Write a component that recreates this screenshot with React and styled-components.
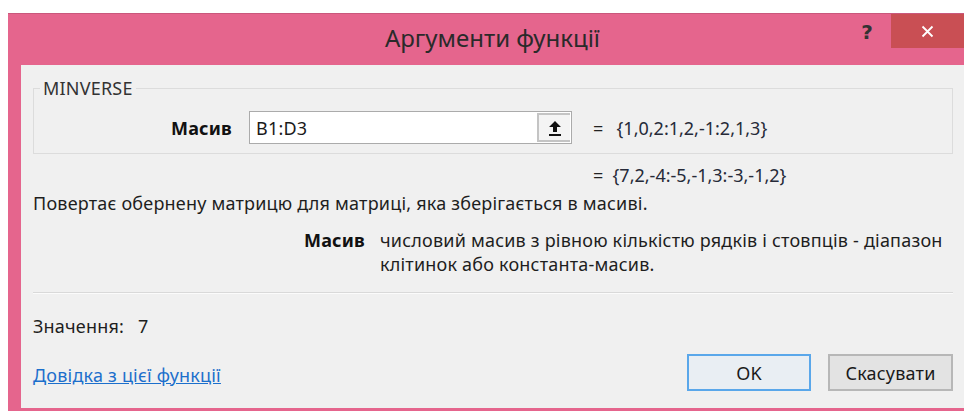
import styled, { createGlobalStyle } from "styled-components";

const GlobalStyle = createGlobalStyle`
  html, body {
    margin: 0;
    padding: 0;
    background: #ffffff;
    overflow: hidden;
  }
  body {
    font-family: "Noto Sans", "Open Sans", sans-serif;
    font-size: 18px;
    letter-spacing: 0.2px;
    color: #1e1e1e;
  }
`;

const ArrowUpIcon = () => (
  <svg width="14" height="16" viewBox="0 0 14 16">
    <path d="M7 1 L13 7 L9 7 L9 12 L5 12 L5 7 L1 7 Z" fill="#111" />
    <rect x="1" y="14" width="12" height="2" fill="#111" />
  </svg>
);

const CloseIcon = () => (
  <svg width="13" height="13" viewBox="0 0 13 13">
    <path d="M1.5 1.5 L11.5 11.5 M11.5 1.5 L1.5 11.5" stroke="#fff" strokeWidth="1.8" />
  </svg>
);

const App = () => {
  return (
    <>
      <GlobalStyle />
      <Window>
        <TitleBar>
          <Title>Аргументи функції</Title>
          <HelpMark>?</HelpMark>
          <CloseButton>
            <CloseIcon />
          </CloseButton>
        </TitleBar>
        <Body>
          <Group>
            <Legend>MINVERSE</Legend>
            <ArgRow>
              <ArgLabel>Масив</ArgLabel>
              <RefBox>
                <RefInput defaultValue="B1:D3" />
                <CollapseButton>
                  <ArrowUpIcon />
                </CollapseButton>
              </RefBox>
              <Eq>=</Eq>
              <Preview>{"{1,0,2:1,2,-1:2,1,3}"}</Preview>
            </ArgRow>
          </Group>

          <ResultRow>
            <Eq>=</Eq>
            <Preview>{"{7,2,-4:-5,-1,3:-3,-1,2}"}</Preview>
          </ResultRow>

          <Description>
            Повертає обернену матрицю для матриці, яка зберігається в масиві.
          </Description>

          <ArgHelp>
            <ArgLabel>Масив</ArgLabel>
            <ArgText>
              числовий масив з рівною кількістю рядків і стовпців - діапазон
              клітинок або константа-масив.
            </ArgText>
          </ArgHelp>

          <Separator />

          <ValueRow>
            <span>Значення:</span>
            <span>7</span>
          </ValueRow>

          <Footer>
            <HelpLink href="#">Довідка з цієї функції</HelpLink>
            <Buttons>
              <DialogButton $primary>OK</DialogButton>
              <DialogButton>Скасувати</DialogButton>
            </Buttons>
          </Footer>
        </Body>
      </Window>
    </>
  );
};

export default App;

const Window = styled.div`
  margin: 13px 0 0 8px;
  width: 969px;
  height: 402px;
  background: #e5658d;
  border-top: 1px solid #c9587c;
  display: flex;
  flex-direction: column;
`;

const TitleBar = styled.div`
  position: relative;
  height: 51px;
  display: flex;
  align-items: center;
  justify-content: center;
`;

const Title = styled.div`
  font-size: 24px;
  letter-spacing: 0;
  color: #2a2a2a;
  margin-top: -4px;
`;

const HelpMark = styled.div`
  position: absolute;
  right: 104px;
  top: 6px;
  font-family: "DejaVu Sans", sans-serif;
  font-weight: bold;
  font-size: 20px;
  color: #333;
`;

const CloseButton = styled.div`
  position: absolute;
  right: 13px;
  top: 0;
  width: 73px;
  height: 34px;
  background: #c94f54;
  display: flex;
  align-items: center;
  justify-content: center;
`;

const Body = styled.div`
  flex: 1;
  margin: 0 12px 8px 13px;
  background: #f0f0f0;
  padding: 14px 12px 0;
  display: flex;
  flex-direction: column;
`;

const Group = styled.fieldset`
  margin: 0;
  padding: 13px 10px 9px 0;
  border: 1px solid #dcdcdc;
  min-width: 0;
`;

const Legend = styled.legend`
  margin-left: 6px;
  padding: 0 3px;
  line-height: 19px;
  color: #333;
`;

const ArgRow = styled.div`
  display: grid;
  grid-template-columns: 198px 323px auto 1fr;
  align-items: center;
  column-gap: 17px;
`;

const ArgLabel = styled.div`
  font-weight: bold;
  text-align: right;
  color: #111;
`;

const RefBox = styled.div`
  display: flex;
  height: 33px;
  box-sizing: border-box;
  border: 1px solid #ababab;
  background: #fff;
`;

const RefInput = styled.input`
  flex: 1;
  min-width: 0;
  border: none;
  outline: none;
  padding: 0 6px;
  font: inherit;
  letter-spacing: inherit;
  color: #1a1a1a;
  background: transparent;
`;

const CollapseButton = styled.div`
  width: 33px;
  margin: 1px;
  box-sizing: border-box;
  border: 2px solid #c4c4c4;
  border-right: none;
  background: #f4f4f4;
  display: flex;
  align-items: center;
  justify-content: center;
`;

const Eq = styled.span`
  margin-left: 4px;
  color: #222;
`;

const Preview = styled.span`
  margin-left: -4px;
  letter-spacing: 0;
  color: #262a38;
`;

const ResultRow = styled.div`
  display: flex;
  gap: 13px;
  margin: 11px 0 0 556px;
  line-height: 20px;
`;

const Description = styled.div`
  margin-top: 8px;
  line-height: 20px;
`;

const ArgHelp = styled.div`
  display: grid;
  grid-template-columns: 332px 1fr;
  column-gap: 15px;
  margin-top: 15px;
  line-height: 24px;
`;

const ArgText = styled.div``;

const Separator = styled.div`
  margin-top: 16px;
  border-top: 1px solid #d9d9d9;
  border-bottom: 1px solid #fbfbfb;
`;

const ValueRow = styled.div`
  display: flex;
  gap: 14px;
  margin-top: 22px;
  line-height: 20px;
`;

const Footer = styled.div`
  display: flex;
  align-items: center;
  justify-content: space-between;
  margin-top: 18px;
`;

const HelpLink = styled.a`
  color: #1c6fcc;
  text-decoration: underline;
  padding-top: 5px;
`;

const Buttons = styled.div`
  display: flex;
  gap: 17px;
`;

const DialogButton = styled.button`
  width: ${(p) => (p.$primary ? "124px" : "125px")};
  height: 37px;
  font: inherit;
  letter-spacing: inherit;
  color: #1a1a1a;
  background: ${(p) => (p.$primary ? "#e9eef3" : "#e3e3e3")};
  border: ${(p) => (p.$primary ? "2px solid #5aa7ea" : "2px solid #b7b7b7")};
  border-radius: 0;
`;
